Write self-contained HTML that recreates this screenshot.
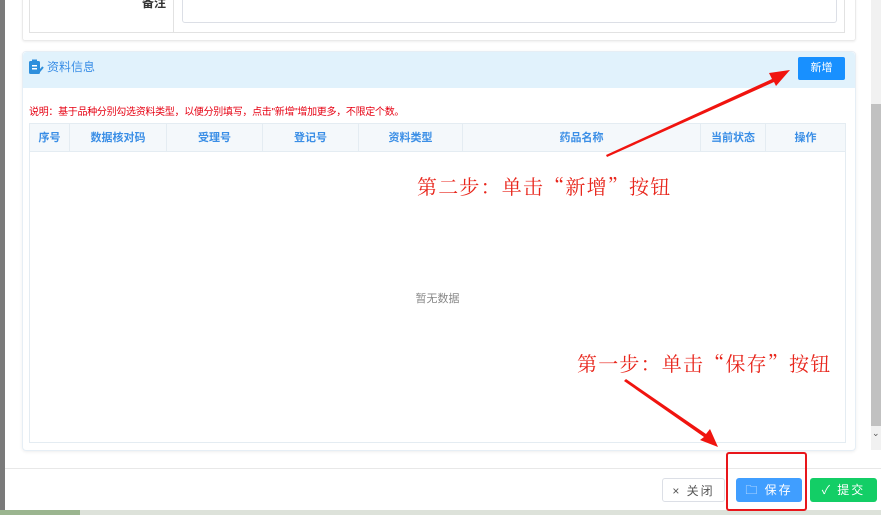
<!DOCTYPE html>
<html><head><meta charset="utf-8"><style>
*{margin:0;padding:0;box-sizing:border-box}
body{width:881px;height:515px;overflow:hidden;position:relative;background:#fff;font-family:"Liberation Sans","Noto Sans CJK SC",sans-serif}
.a{position:absolute}
.th{position:absolute;top:0;height:28px;line-height:28px;text-align:center;color:#3a8ee6;font-weight:bold;font-size:11px;border-right:1px solid #e4ecf2}
.btn{position:absolute;top:478px;height:24px;line-height:24px;font-size:12px;text-align:center;border-radius:3px;letter-spacing:2px}
</style></head><body>
<div class="a" style="left:0;top:0;width:5px;height:510px;background:#7a7a7a"></div>
<div class="a" style="left:0;top:510px;width:881px;height:5px;background:#dde2da"></div>
<div class="a" style="left:0;top:510px;width:80px;height:5px;background:#9bb58f"></div>
<!-- top panel -->
<div class="a" style="left:22px;top:-5px;width:834px;height:46px;border:1px solid #eaeaea;border-radius:3px;box-shadow:0 1px 2px #eee"></div>
<div class="a" style="left:29px;top:-5px;width:816px;height:38px;border:1px solid #e2e2e2"></div>
<div class="a" style="left:173px;top:0;width:1px;height:32px;background:#e2e2e2"></div>
<div class="a" style="left:142px;top:-6px;font-size:12px;color:#333;font-weight:bold">备注</div>
<div class="a" style="left:182px;top:-5px;width:655px;height:28px;border:1px solid #dcdfe6;border-radius:3px"></div>
<!-- info panel -->
<div class="a" style="left:22px;top:51px;width:834px;height:400px;border:1px solid #e6eef5;border-radius:4px;box-shadow:0 1px 3px #eee"></div>
<div class="a" style="left:23px;top:52px;width:832px;height:36px;background:#e1f2fc;border-radius:4px 4px 0 0"></div>
<svg class="a" style="left:28px;top:59px" width="16" height="16" viewBox="0 0 16 16"><rect x="1" y="2" width="11" height="13" rx="1.5" fill="#2e8fdc"/><rect x="4" y="0.5" width="5" height="3" fill="#2e8fdc"/><rect x="4" y="6" width="5" height="1.5" fill="#fff"/><rect x="4" y="9" width="5" height="1.5" fill="#fff"/><path d="M10 14 L15 8" stroke="#2e8fdc" stroke-width="2"/></svg>
<div class="a" style="left:47px;top:58px;font-size:12px;color:#3a8ee6">资料信息</div>
<div class="a" style="left:798px;top:57px;width:47px;height:23px;background:#1890ff;border-radius:2px;color:#fff;font-size:11px;line-height:23px;text-align:center">新增</div>
<div class="a" style="left:29px;top:103px;font-size:10px;color:#e60012;letter-spacing:-0.3px">说明：基于品种分别勾选资料类型，以便分别填写，点击"新增"增加更多，不限定个数。</div>
<div class="a" style="left:29px;top:123px;width:817px;height:320px;border:1px solid #e4ecf2">
 <div class="a" style="left:0;top:0;width:815px;height:28px;background:#f4f8fb;border-bottom:1px solid #e4ecf2"></div>
 <div class="th" style="left:0;width:40px">序号</div>
 <div class="th" style="left:40px;width:97px">数据核对码</div>
 <div class="th" style="left:137px;width:96px">受理号</div>
 <div class="th" style="left:233px;width:96px">登记号</div>
 <div class="th" style="left:329px;width:104px">资料类型</div>
 <div class="th" style="left:433px;width:238px">药品名称</div>
 <div class="th" style="left:671px;width:65px">当前状态</div>
 <div class="th" style="left:736px;width:79px;border-right:none">操作</div>
 <div class="a" style="left:0;top:166px;width:815px;text-align:center;font-size:11px;color:#888">暂无数据</div>
</div>
<!-- scrollbar -->
<div class="a" style="left:871px;top:0;width:10px;height:450px;background:#f1f1f1"></div>
<div class="a" style="left:871px;top:104px;width:10px;height:322px;background:#c1c1c1"></div>
<div class="a" style="left:872px;top:428px;font-size:9px;color:#555">&#8964;</div>
<!-- footer -->
<div class="a" style="left:5px;top:468px;width:876px;height:1px;background:#e8e8e8"></div>
<div class="btn" style="left:662px;width:63px;border:1px solid #dcdfe6;color:#555">× 关闭</div>
<div class="btn" style="left:736px;width:66px;background:#409eff;color:#fff">🗀 保存</div>
<div class="btn" style="left:810px;width:67px;background:#13ce66;color:#fff">✓ 提交</div>
<div class="a" style="left:726px;top:452px;width:81px;height:59px;border:2px solid #e8161b;border-radius:3px"></div>
<!-- annotations -->
<div class="a" style="left:417px;top:171px;font-size:20px;letter-spacing:1.2px;color:#e8261c;font-family:'Noto Serif CJK SC','Noto Sans CJK SC',serif">第二步：单击“新增”按钮</div>
<div class="a" style="left:577px;top:348px;font-size:20px;letter-spacing:1.2px;color:#e8261c;font-family:'Noto Serif CJK SC','Noto Sans CJK SC',serif">第一步：单击“保存”按钮</div>
<svg class="a" style="left:0;top:0" width="881" height="515">
<polygon points="607,157 606,155 772,79 769,73 790,70 776,86 774,82" fill="#f0140f"/>
<polygon points="624,381 626,379 706,434 710,429 718,447 700,440 704,437" fill="#f0140f"/>
</svg>
</body></html>
